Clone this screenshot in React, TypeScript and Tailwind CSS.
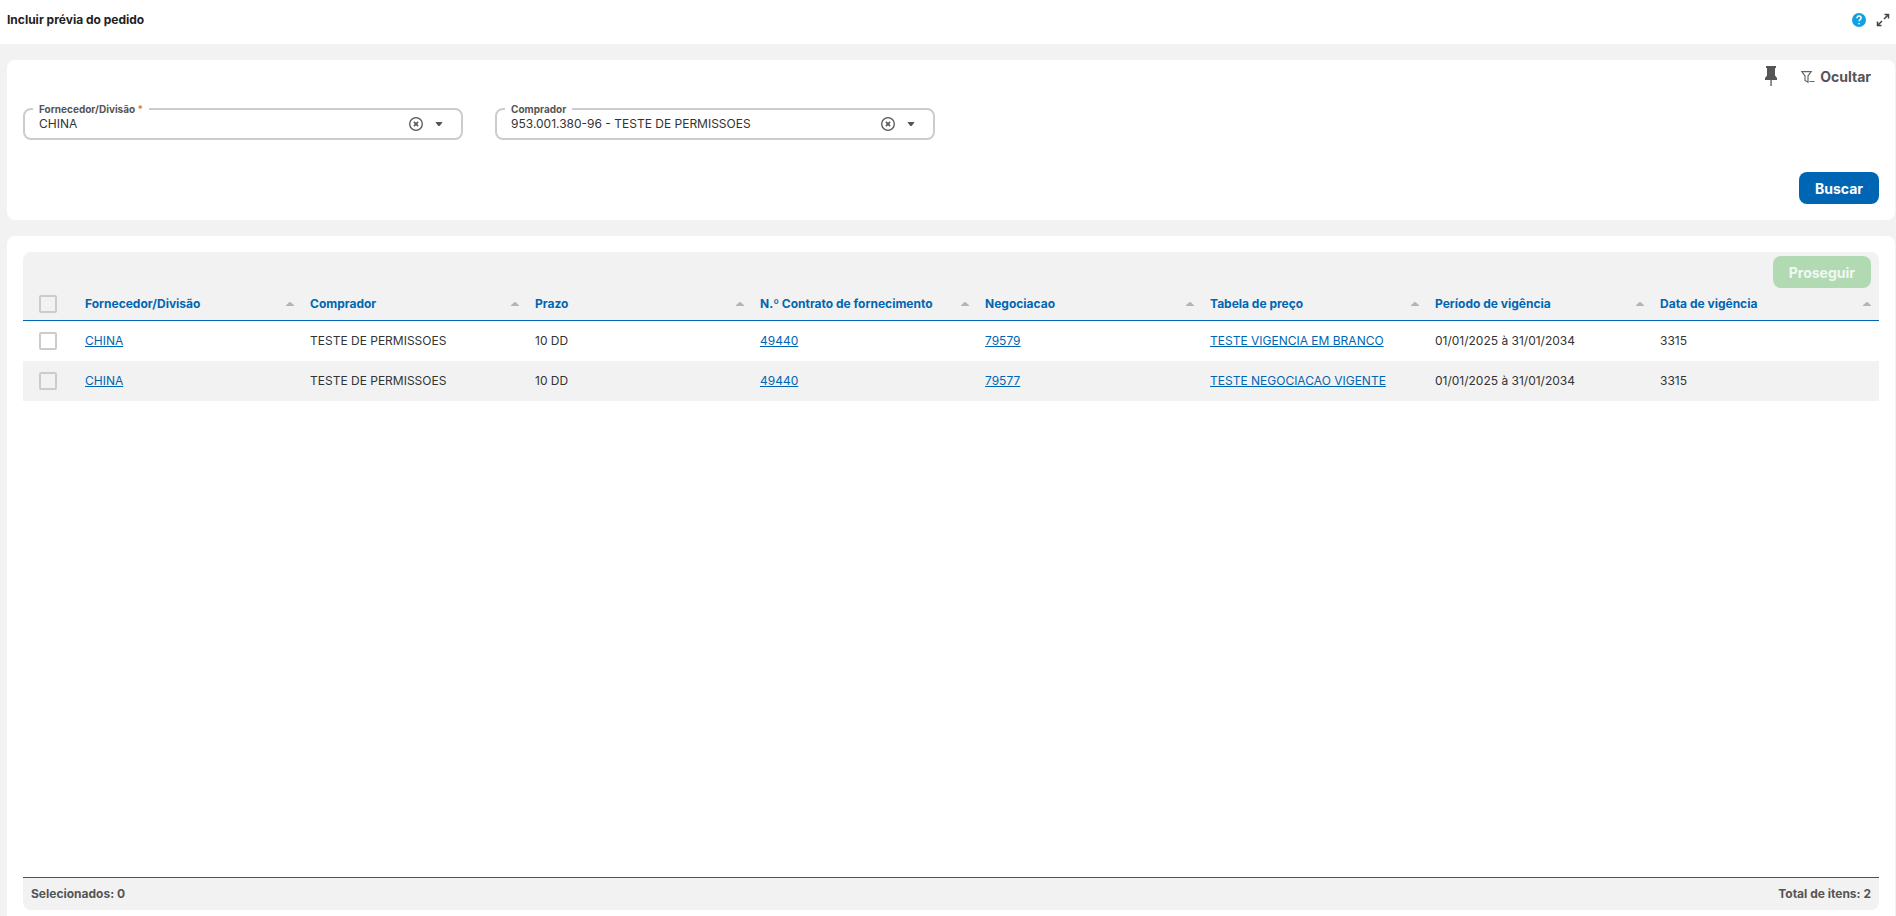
import { useState } from 'react';

interface FieldProps {
  id: string;
  label: string;
  initial: string;
  required?: boolean;
}

interface Row {
  fornecedor: string;
  comprador: string;
  prazo: string;
  contrato: string;
  negociacao: string;
  tabela: string;
  periodo: string;
  data: string;
}

const columns = [
  'Fornecedor/Divisão',
  'Comprador',
  'Prazo',
  'N.º Contrato de fornecimento',
  'Negociacao',
  'Tabela de preço',
  'Período de vigência',
  'Data de vigência',
];

const rows: Row[] = [
  {
    fornecedor: 'CHINA',
    comprador: 'TESTE DE PERMISSOES',
    prazo: '10 DD',
    contrato: '49440',
    negociacao: '79579',
    tabela: 'TESTE VIGENCIA EM BRANCO',
    periodo: '01/01/2025 à 31/01/2034',
    data: '3315',
  },
  {
    fornecedor: 'CHINA',
    comprador: 'TESTE DE PERMISSOES',
    prazo: '10 DD',
    contrato: '49440',
    negociacao: '79577',
    tabela: 'TESTE NEGOCIACAO VIGENTE',
    periodo: '01/01/2025 à 31/01/2034',
    data: '3315',
  },
];

const checkboxClass =
  'block size-[18px] cursor-pointer appearance-none rounded-xs border-2 border-[#ccc] checked:border-[#0066b3] checked:bg-[#0066b3]';

function ComboField({ id, label, initial, required = false }: FieldProps) {
  const [value, setValue] = useState(initial);

  return (
    <fieldset className="h-10 min-w-0 rounded-lg border-2 border-[#ccc] pl-2">
      <legend className="px-1.5 text-[10px] leading-[18px] font-bold text-[#555]">
        <label htmlFor={id}>
          {label}
          {required && <span className="text-[#e07b39]"> *</span>}
        </label>
      </legend>
      <div className="flex h-3 items-center pr-3.5 pl-1.5">
        <input
          id={id}
          type="text"
          value={value}
          onChange={(e) => setValue(e.target.value)}
          className="min-w-0 flex-1 text-xs leading-4 text-[#333] outline-none"
        />
        <button type="button" aria-label={`Limpar ${label}`} onClick={() => setValue('')} className="mr-2">
          <svg viewBox="0 0 14 14" className="size-3.5" fill="none" stroke="#555">
            <circle cx="7" cy="7" r="6.3" strokeWidth="1.3" />
            <path d="M4.9 4.9l4.2 4.2M9.1 4.9L4.9 9.1" strokeWidth="1.5" />
          </svg>
        </button>
        <button type="button" aria-label={`Abrir ${label}`} className="px-1">
          <svg viewBox="0 0 8 4" className="h-1 w-2" fill="#555">
            <path d="M0.8 0h6.4v0.800L4.600 4H3.400L0.800 0.800z" />
          </svg>
        </button>
      </div>
    </fieldset>
  );
}

function CellLink({ children }: { children: string }) {
  return (
    <a href="#" className="text-[#0066b3] underline">
      {children}
    </a>
  );
}

function PageHeader() {
  return (
    <header className="flex h-11 items-center justify-between bg-white pr-1.5 pb-1 pl-[7px]">
      <h1 className="text-xs font-bold text-[#222]">Incluir prévia do pedido</h1>
      <div className="flex items-center gap-2.5">
        <button type="button" aria-label="Ajuda">
          <svg viewBox="0 0 14 14" className="size-3.5">
            <circle cx="7" cy="7" r="7" fill="#11a0e0" />
            <path d="M4.9 5.3c0-1.300.9-2.200 2.1-2.200s2.1.8 2.1 1.900c0 1.500-2 1.600-2 3.300" fill="none" stroke="#fff" strokeWidth="1.5" />
            <circle cx="7.1" cy="10.6" r="0.9" fill="#fff" />
          </svg>
        </button>
        <button type="button" aria-label="Expandir">
          <svg viewBox="0 0 14 14" className="size-3.5" fill="none" stroke="#444" strokeWidth="1.5">
            <path d="M8.5 1.500h4v4M12.500 1.500L8 6M5.500 12.500h-4v-4M1.500 12.500L6 8" />
          </svg>
        </button>
      </div>
    </header>
  );
}

function Filters() {
  return (
    <section className="flex h-40 flex-col rounded-lg bg-white px-4 pb-4">
      <div className="flex h-8 items-center justify-end gap-6 pr-2">
        <button type="button" aria-label="Fixar filtros">
          <svg viewBox="0 0 12 20" className="h-5 w-3" fill="#555">
            <path d="M1 0h10v2H10v7.500l2 2.500v2H0v-2l2-2.500V2H1zM5.400 14h1.300v6H5.400z" />
          </svg>
        </button>
        <button type="button" className="flex items-center gap-[5px] pt-0.5 text-sm font-bold text-[#555]">
          <svg viewBox="0 0 14 12" className="h-3 w-3.5" fill="none" stroke="#666">
            <path d="M.8.6h9.400L7 5v6.200L4 9.400V5z" strokeWidth="1.2" />
            <path d="M8.500 10.500H13.500" />
          </svg>
          Ocultar
        </button>
      </div>
      <div className="mt-2 grid grid-cols-4 gap-8">
        <ComboField id="fornecedor" label="Fornecedor/Divisão" initial="CHINA" required />
        <ComboField id="comprador" label="Comprador" initial="953.001.380-96 - TESTE DE PERMISSOES" />
      </div>
      <div className="mt-auto flex justify-end">
        <button type="button" className="h-8 rounded-lg bg-[#0066b3] px-4 pt-0.5 text-sm font-bold text-white">
          Buscar
        </button>
      </div>
    </section>
  );
}

function Results() {
  const [selected, setSelected] = useState<number[]>([]);

  const toggle = (index: number) => {
    setSelected((prev) => (prev.includes(index) ? prev.filter((i) => i !== index) : [...prev, index]));
  };

  const toggleAll = () => {
    setSelected(selected.length === rows.length ? [] : rows.map((_, i) => i));
  };

  return (
    <section className="flex flex-1 flex-col rounded-t-lg bg-white px-4 pt-4 pb-1.5">
      <div className="flex h-10 items-start justify-end rounded-t-lg bg-[#f2f2f2] pt-1 pr-2">
        <button
          type="button"
          disabled={selected.length === 0}
          className="h-8 rounded-lg bg-[#4caf50] px-4 pt-0.5 text-sm font-bold text-white disabled:bg-[#b1dab3] disabled:text-white/80"
        >
          Proseguir
        </button>
      </div>

      <div className="overflow-x-auto">
        <table className="w-full table-fixed border-separate border-spacing-0 text-left text-xs text-[#333]">
          <colgroup>
            <col className="w-[54px]" />
            {columns.map((column) => (
              <col key={column} className="w-[225px] last:w-auto" />
            ))}
          </colgroup>
          <thead className="bg-[#f2f2f2]">
            <tr className="h-[29px]">
              <th className="border-b border-[#0066b3] pb-1 pl-4">
                <input
                  type="checkbox"
                  aria-label="Selecionar todos"
                  checked={selected.length === rows.length}
                  onChange={toggleAll}
                  className={checkboxClass}
                />
              </th>
              {columns.map((column) => (
                <th key={column} className="border-b border-[#0066b3] px-2 pb-1 font-bold text-[#0066b3]">
                  <button type="button" className="flex w-full items-center justify-between text-left">
                    {column}
                    <svg viewBox="0 0 8 4" className="h-1 w-2 shrink-0" fill="#b5b5b5">
                      <path d="M3.500 0h1L8 3.300V4H0v-.7z" />
                    </svg>
                  </button>
                </th>
              ))}
            </tr>
          </thead>
          <tbody>
            {rows.map((row, i) => (
              <tr key={row.negociacao} className="h-10 even:bg-[#f2f2f2]">
                <td className="pl-4">
                  <input
                    type="checkbox"
                    aria-label={`Selecionar negociação ${row.negociacao}`}
                    checked={selected.includes(i)}
                    onChange={() => toggle(i)}
                    className={checkboxClass}
                  />
                </td>
                <td className="px-2">
                  <CellLink>{row.fornecedor}</CellLink>
                </td>
                <td className="px-2">{row.comprador}</td>
                <td className="px-2">{row.prazo}</td>
                <td className="px-2">
                  <CellLink>{row.contrato}</CellLink>
                </td>
                <td className="px-2">
                  <CellLink>{row.negociacao}</CellLink>
                </td>
                <td className="px-2">
                  <CellLink>{row.tabela}</CellLink>
                </td>
                <td className="px-2">{row.periodo}</td>
                <td className="px-2">{row.data}</td>
              </tr>
            ))}
          </tbody>
        </table>
      </div>

      <footer className="mt-auto flex h-[33px] items-center justify-between rounded-b-lg border-t border-[#0066b3] bg-[#f2f2f2] px-2 text-xs font-bold text-[#555]">
        <span>Selecionados: {selected.length}</span>
        <span>Total de itens: {rows.length}</span>
      </footer>
    </section>
  );
}

export default function App() {
  return (
    <div className="flex min-h-screen flex-col bg-[#f2f2f2] font-['Inter',sans-serif]">
      <PageHeader />
      <main className="flex flex-1 flex-col gap-4 pt-4 pr-px pl-[7px]">
        <Filters />
        <Results />
      </main>
    </div>
  );
}
